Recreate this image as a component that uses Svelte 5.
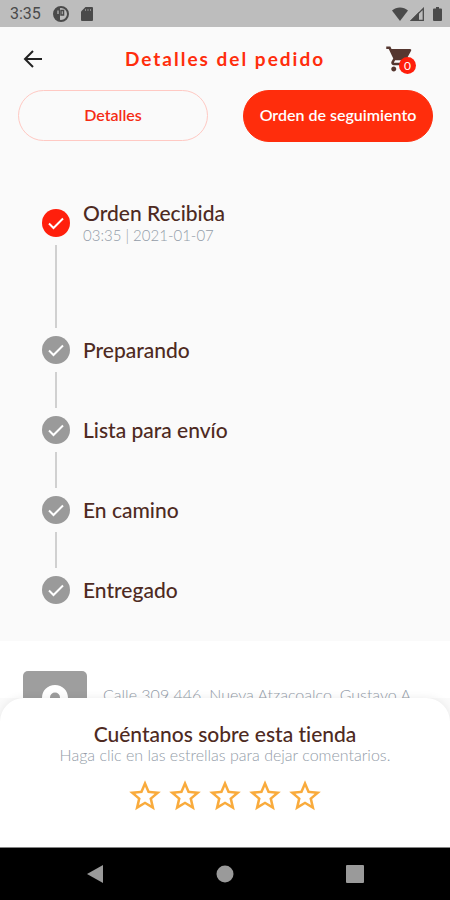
<script>
  const steps = [
    { title: 'Orden Recibida', time: '03:35 | 2021-01-07', done: true },
    { title: 'Preparando' },
    { title: 'Lista para envío' },
    { title: 'En camino' },
    { title: 'Entregado' }
  ];
  let tab = $state('seguimiento');
  let rating = $state(0);
</script>

<div class="screen">
  <div class="status">
    <span class="clock">3:35</span>
    <svg width="16" height="16" viewBox="0 0 16 16">
      <circle cx="8" cy="8" r="7" fill="none" stroke="#4a4a4a" stroke-width="2" />
      <path d="M2 4l2-2h3v12H5L2 11z" fill="#4a4a4a" />
      <path d="M8 4.500h2.500v4.500H8z" fill="none" stroke="#4a4a4a" stroke-width="1.500" />
      <path d="M5 4.500v3.500" stroke="#bdbdbd" stroke-width="1.200" />
    </svg>
    <svg class="sd" width="12" height="14" viewBox="0 0 12 14">
      <path d="M4.500 0H11a1 1 0 0 1 1 1v12a1 1 0 0 1-1 1H1a1 1 0 0 1-1-1V4.500z" fill="#4a4a4a" />
      <path d="M4.500 2v2M7 2v2M9.500 2v2" stroke="#8a8a8a" />
    </svg>
    <span class="space"></span>
    <svg width="16" height="14" viewBox="0 0 16 14">
      <path d="M0 3.500C4.500-.6 11.500-.6 16 3.500L8 14z" fill="#4a4a4a" />
    </svg>
    <svg class="signal" width="14" height="14" viewBox="0 0 14 14">
      <path d="M13.300 1.500v11.800H1.500z" fill="none" stroke="#4a4a4a" stroke-width="1.3" />
      <path d="M0 14L9 5v9z" fill="#4a4a4a" />
    </svg>
    <svg class="battery" width="9" height="14" viewBox="0 0 9 14">
      <path d="M3 0h3v1.500h2q1 0 1 1V13q0 1-1 1H1q-1 0-1-1V2.500q0-1 1-1h2z" fill="#4a4a4a" />
    </svg>
  </div>

  <header>
    <button class="icon" aria-label="Volver">
      <svg width="20" height="20" viewBox="0 0 20 20">
        <path d="M19 10H2M10 2L2 10l8 8" fill="none" stroke="#222" stroke-width="2" />
      </svg>
    </button>
    <h1>Detalles del pedido</h1>
    <button class="icon cart" aria-label="Carrito">
      <svg width="30" height="30" viewBox="0 0 24 24">
        <path
          fill="#553730"
          d="M7 18c-1.100 0-1.990.9-1.990 2S5.900 22 7 22s2-.9 2-2-.9-2-2-2zM1 2v2h2l3.600 7.590-1.350 2.450c-.16.28-.25.61-.25.960 0 1.100.9 2 2 2h12v-2H7.420c-.14 0-.25-.11-.25-.25l.03-.12.9-1.630h7.450c.75 0 1.410-.41 1.750-1.030l3.580-6.490A1 1 0 0 0 20 4H5.210l-.94-2H1zm16 16c-1.100 0-1.990.9-1.990 2s.89 2 1.990 2 2-.9 2-2-.9-2-2-2z"
        />
      </svg>
      <span class="badge">0</span>
    </button>
  </header>

  <nav class="tabs">
    <button class:active={tab === 'detalles'} onclick={() => (tab = 'detalles')}>Detalles</button>
    <button class:active={tab === 'seguimiento'} onclick={() => (tab = 'seguimiento')}>Orden de seguimiento</button>
  </nav>

  <main>
    <ol>
      {#each steps as step, i}
        <li class:done={step.done}>
          <div class="head">
            <svg class="check" width="28" height="28" viewBox="0 0 28 28">
              <circle cx="14" cy="14" r="14" />
              <path d="M7 14.500l4.500 4.500L21 9.500" fill="none" stroke="#fff" stroke-width="2" />
            </svg>
            <div>
              <h2>{step.title}</h2>
              {#if step.time}<p class="time">{step.time}</p>{/if}
            </div>
          </div>
          {#if i < steps.length - 1}<div class="line"></div>{/if}
        </li>
      {/each}
    </ol>
    <section class="address">
      <svg width="64" height="64" viewBox="0 0 64 64">
        <rect width="64" height="64" rx="5" fill="#9e9e9e" />
        <path
          d="M32 14c-7.500 0-13 5.500-13 13 0 9 13 24 13 24s13-15 13-24c0-7.500-5.500-13-13-13zm0 17.500a5 5 0 1 1 0-10 5 5 0 0 1 0 10z"
          fill="#fff"
        />
      </svg>
      <p>Calle 309 446, Nueva Atzacoalco, Gustavo A.</p>
    </section>
  </main>

  <section class="sheet">
    <h2>Cuéntanos sobre esta tienda</h2>
    <p>Haga clic en las estrellas para dejar comentarios.</p>
    <div class="stars">
      {#each [1, 2, 3, 4, 5] as n}
        <button aria-label="{n} estrellas" onclick={() => (rating = n)}>
          <svg width="38" height="38" viewBox="0 0 24 24">
            <path
              fill="#f9ab3c"
              d={n <= rating
                ? 'M12 17.270L18.180 21l-1.640-7.030L22 9.240l-7.190-.61L12 2 9.190 8.630 2 9.240l5.460 4.730L5.820 21z'
                : 'M22 9.240l-7.190-.62L12 2 9.190 8.630 2 9.240l5.460 4.730L5.820 21 12 17.270 18.180 21l-1.630-7.030L22 9.240zM12 15.400l-3.760 2.270 1-4.280-3.320-2.880 4.380-.38L12 6.100l1.710 4.040 4.380.38-3.320 2.880 1 4.280L12 15.400z'}
            />
          </svg>
        </button>
      {/each}
    </div>
  </section>

  <footer>
    <button aria-label="Atrás"><svg width="18" height="18" viewBox="0 0 18 18"><path d="M17 0v18L1 9z" /></svg></button>
    <button aria-label="Inicio"><svg width="18" height="18" viewBox="0 0 18 18"><circle cx="9" cy="9" r="8.500" /></svg></button>
    <button aria-label="Recientes"><svg width="18" height="18" viewBox="0 0 18 18"><rect width="18" height="18" rx="1" /></svg></button>
  </footer>
</div>

<style>
  :global(body) {
    margin: 0;
  }
  .screen {
    display: flex;
    flex-direction: column;
    height: 100vh;
    overflow: hidden;
    background: #fafafa;
    color: #4e2a22;
    font-family: Lato, sans-serif;
    font-variant-ligatures: none;
  }
  h1, h2, p, ol {
    margin: 0;
    padding: 0;
  }
  svg {
    display: block;
    flex: none;
  }
  button {
    border: 0;
    padding: 0;
    background: none;
    font: inherit;
    cursor: pointer;
  }
  .status {
    display: flex;
    align-items: center;
    height: 27px;
    flex: none;
    padding: 0 8px 0 10px;
    background: #bdbdbd;
  }
  .clock {
    width: 43px;
    color: #4a4a4a;
    font: 16px/27px Roboto, sans-serif;
  }
  .sd {
    margin-left: 12px;
  }
  .space {
    flex: 1;
  }
  .signal {
    margin-left: 2px;
  }
  .battery {
    margin-left: 9px;
  }
  header {
    display: grid;
    grid-template-columns: 1fr auto 1fr;
    align-items: center;
    flex: none;
    height: 63px;
    padding: 0 23px;
  }
  .icon {
    width: 30px;
    height: 30px;
  }
  h1 {
    color: #ff2d0c;
    font-size: 19px;
    font-weight: 700;
    letter-spacing: 2px;
  }
  .cart {
    position: relative;
    justify-self: end;
    margin-right: 12px;
  }
  .badge {
    position: absolute;
    right: -1px;
    bottom: 0;
    width: 17px;
    border-radius: 50%;
    background: #ff1f0c;
    color: #fff;
    font-size: 12px;
    line-height: 17px;
  }
  .tabs {
    display: flex;
    align-items: flex-start;
    gap: 35px;
    flex: none;
    height: 52px;
    padding: 0 17px 0 18px;
  }
  .tabs button {
    flex: 1;
    height: 51px;
    padding-bottom: 3px;
    border: 1px solid #ffc9c3;
    border-radius: 26px;
    color: #f52b14;
    font-size: 16px;
    font-weight: 600;
    white-space: nowrap;
  }
  .tabs .active {
    height: 52px;
    border-color: #ff2d0c;
    background: #ff2d0c;
    color: #fff;
  }
  main {
    flex: 1;
    min-height: 0;
    overflow: hidden;
    background: #fff;
  }
  ol {
    padding: 59px 24px 29px 42px;
    background: #fafafa;
    list-style: none;
  }
  .head {
    display: flex;
    align-items: center;
    gap: 13px;
    height: 44px;
  }
  .check {
    fill: #9a9a9a;
  }
  .done .check {
    fill: #ff1f0c;
  }
  h2 {
    font-size: 21px;
    font-weight: 500;
    line-height: 24px;
  }
  p {
    color: #939ca8;
    font-size: 16px;
    font-weight: 300;
    line-height: 18px;
  }
  .time {
    font-size: 15px;
    line-height: 20px;
  }
  .line {
    width: 2px;
    height: 36px;
    margin-left: 13px;
    background: #d0d0d0;
  }
  .done .line {
    height: 83px;
  }
  .address {
    display: flex;
    gap: 16px;
    padding: 30px 23px;
  }
  .address p {
    padding-top: 15px;
    white-space: nowrap;
  }
  .sheet {
    position: relative;
    flex: none;
    padding: 24px 0 31px;
    border-radius: 24px 24px 0 0;
    background: #fff;
    box-shadow: 0 0 8px #00000014;
    text-align: center;
  }
  .stars {
    display: flex;
    justify-content: center;
    margin-top: 12px;
  }
  .stars button {
    display: grid;
    place-items: center;
    width: 40px;
    height: 40px;
  }
  footer {
    display: flex;
    align-items: center;
    justify-content: space-around;
    flex: none;
    height: 52px;
    padding: 0 30px;
    border-top: 1px solid #888;
    background: #000;
    fill: #9a9a9a;
  }
</style>
